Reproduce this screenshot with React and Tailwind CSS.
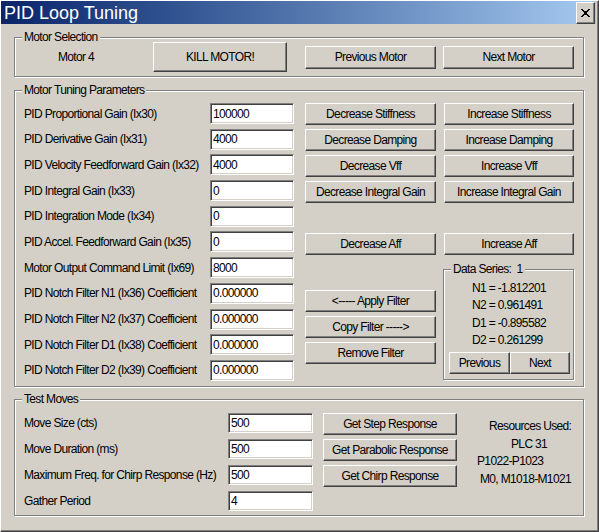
import React from 'react';

const params = [
    ['PID Proportional Gain (Ix30)', '100000'],
    ['PID Derivative Gain (Ix31)', '4000'],
    ['PID Velocity Feedforward Gain (Ix32)', '4000'],
    ['PID Integral Gain (Ix33)', '0'],
    ['PID Integration Mode (Ix34)', '0'],
    ['PID Accel. Feedforward Gain (Ix35)', '0'],
    ['Motor Output Command Limit (Ix69)', '8000'],
    ['PID Notch Filter N1 (Ix36) Coefficient', '0.000000'],
    ['PID Notch Filter N2 (Ix37) Coefficient', '0.000000'],
    ['PID Notch Filter D1 (Ix38) Coefficient', '0.000000'],
    ['PID Notch Filter D2 (Ix39) Coefficient', '0.000000'],
];

const gainButtons = [
    ['Decrease Stiffness', 'Increase Stiffness'],
    ['Decrease Damping', 'Increase Damping'],
    ['Decrease Vff', 'Increase Vff'],
    ['Decrease Integral Gain', 'Increase Integral Gain'],
];

const testMoves = [
    ['Move Size (cts)', '500'],
    ['Move Duration (ms)', '500'],
    ['Maximum Freq. for Chirp Response (Hz)', '500'],
    ['Gather Period', '4'],
];

// raised classic button
const Btn = ({ children, className = '' }) => (
    <button
        type="button"
        className={`flex items-center justify-center h-[22px] bg-[#d4d0c8] border border-t-white border-l-white border-r-[#404040] border-b-[#404040] shadow-[inset_-1px_-1px_0_#808080] leading-none ${className}`}
    >
        {children}
    </button>
);

// sunken edit box
const Field = ({ value, className = '' }) => (
    <input
        type="text"
        defaultValue={value}
        className={`bg-white pl-[2px] border border-t-[#808080] border-l-[#808080] border-b-white border-r-white shadow-[inset_1px_1px_0_#404040,inset_-1px_-1px_0_#d4d0c8] outline-none leading-none ${className}`}
    />
);

const GroupBox = ({ label, className = '', children }) => (
    <div className={`relative border border-[#808080] shadow-[inset_1px_1px_0_#fff,1px_1px_0_#fff] ${className}`}>
        <span className="absolute top-[-8px] left-[7px] px-[2px] leading-[14px] bg-[#d4d0c8] whitespace-pre">
            {label}
        </span>
        {children}
    </div>
);

const CloseGlyph = () => (
    <svg width="9" height="8" viewBox="0 0 8 7" shapeRendering="crispEdges">
        <path
            d="M0 0h2v1H0zM6 0h2v1H6zM1 1h2v1H1zM5 1h2v1H5zM2 2h4v1H2zM3 3h2v1H3zM2 4h4v1H2zM1 5h2v1H1zM5 5h2v1H5zM0 6h2v1H0zM6 6h2v1H6z"
            fill="#000"
        />
    </svg>
);

const App = () => {
    return (
        <div className="w-[599px] h-[532px] overflow-hidden bg-[#d4d0c8] border border-t-white border-l-white border-r-[#404040] border-b-[#404040] shadow-[inset_-1px_-1px_0_#808080] text-black text-[12px] tracking-[-0.65px] font-['Liberation_Sans',Arial,sans-serif]">
            {/* title bar */}
            <div className="flex items-center justify-between h-[23px] mr-[2px] pl-[3px] pr-[1px] bg-linear-to-r from-[#0a246a] to-[#a6caf0]">
                <span className="text-white text-[18px] tracking-normal leading-none">PID Loop Tuning</span>
                <Btn className="w-[19px] h-[17px]">
                    <CloseGlyph />
                </Btn>
            </div>

            {/* motor selection */}
            <GroupBox label="Motor Selection" className="ml-[13px] mt-[13px] w-[570px] h-[40px]">
                <div className="flex items-center h-full">
                    <span className="w-[138px] pl-[43px]">Motor 4</span>
                    <Btn className="w-[134px] h-[30px]">KILL MOTOR!</Btn>
                    <Btn className="ml-[18px] w-[131px] h-[23px]">Previous Motor</Btn>
                    <Btn className="ml-[7px] w-[131px] h-[23px]">Next Motor</Btn>
                </div>
            </GroupBox>

            {/* tuning parameters */}
            <GroupBox label="Motor Tuning Parameters" className="ml-[13px] mt-[13px] w-[570px] h-[297px]">
                <div className="flex pl-[9px] pt-[12px]">
                    <div className="grid grid-cols-[186px_84px] gap-y-[4.7px] items-center">
                        {params.map(([label, value]) => (
                            <React.Fragment key={label}>
                                <span className="whitespace-nowrap">{label}</span>
                                <Field value={value} className="w-[84px] h-[21px]" />
                            </React.Fragment>
                        ))}
                    </div>

                    <div className="ml-[11px] flex flex-col">
                        {gainButtons.map(([dec, inc], i) => (
                            <div key={dec} className={`flex ${i > 0 ? 'mt-[4px]' : ''}`}>
                                <Btn className="w-[131px]">{dec}</Btn>
                                <Btn className="ml-[8px] w-[130px]">{inc}</Btn>
                            </div>
                        ))}
                        <div className="flex mt-[30px]">
                            <Btn className="w-[131px]">Decrease Aff</Btn>
                            <Btn className="ml-[8px] w-[130px]">Increase Aff</Btn>
                        </div>

                        <div className="flex items-start mt-[14px]">
                            <div className="flex flex-col gap-[4px] mt-[21px] w-[131px]">
                                <Btn>&lt;----- Apply Filter</Btn>
                                <Btn>Copy Filter -----&gt;</Btn>
                                <Btn>Remove Filter</Btn>
                            </div>
                            <GroupBox label={'Data Series:  1'} className="ml-[7px] w-[131px] h-[111px]">
                                <div className="pl-[28px] pt-[10px] leading-[17.3px]">
                                    <div>N1 = -1.812201</div>
                                    <div>N2 = 0.961491</div>
                                    <div>D1 = -0.895582</div>
                                    <div>D2 = 0.261299</div>
                                </div>
                                <div className="flex pl-[5px] mt-[3px]">
                                    <Btn className="w-[61px]">Previous</Btn>
                                    <Btn className="w-[60px]">Next</Btn>
                                </div>
                            </GroupBox>
                        </div>
                    </div>
                </div>
            </GroupBox>

            {/* test moves */}
            <GroupBox label="Test Moves" className="ml-[13px] mt-[12px] w-[570px] h-[117px]">
                <div className="flex pl-[9px] pt-[13px]">
                    <div className="grid grid-cols-[204px_85px] gap-y-[6px] items-center">
                        {testMoves.map(([label, value]) => (
                            <React.Fragment key={label}>
                                <span className="whitespace-nowrap">{label}</span>
                                <Field value={value} className="w-[85px] h-[20px]" />
                            </React.Fragment>
                        ))}
                    </div>
                    <div className="ml-[10px] flex flex-col gap-[4px]">
                        <Btn className="w-[134px]">Get Step Response</Btn>
                        <Btn className="w-[134px]">Get Parabolic Response</Btn>
                        <Btn className="w-[134px]">Get Chirp Response</Btn>
                    </div>
                    <div className="ml-[20px] mt-[5px] flex flex-col leading-[17.7px] whitespace-nowrap">
                        <span className="ml-[12px]">Resources Used:</span>
                        <span className="ml-[34px]">PLC 31</span>
                        <span>P1022-P1023</span>
                        <span className="ml-[3px]">M0, M1018-M1021</span>
                    </div>
                </div>
            </GroupBox>
        </div>
    );
};

export default App;
